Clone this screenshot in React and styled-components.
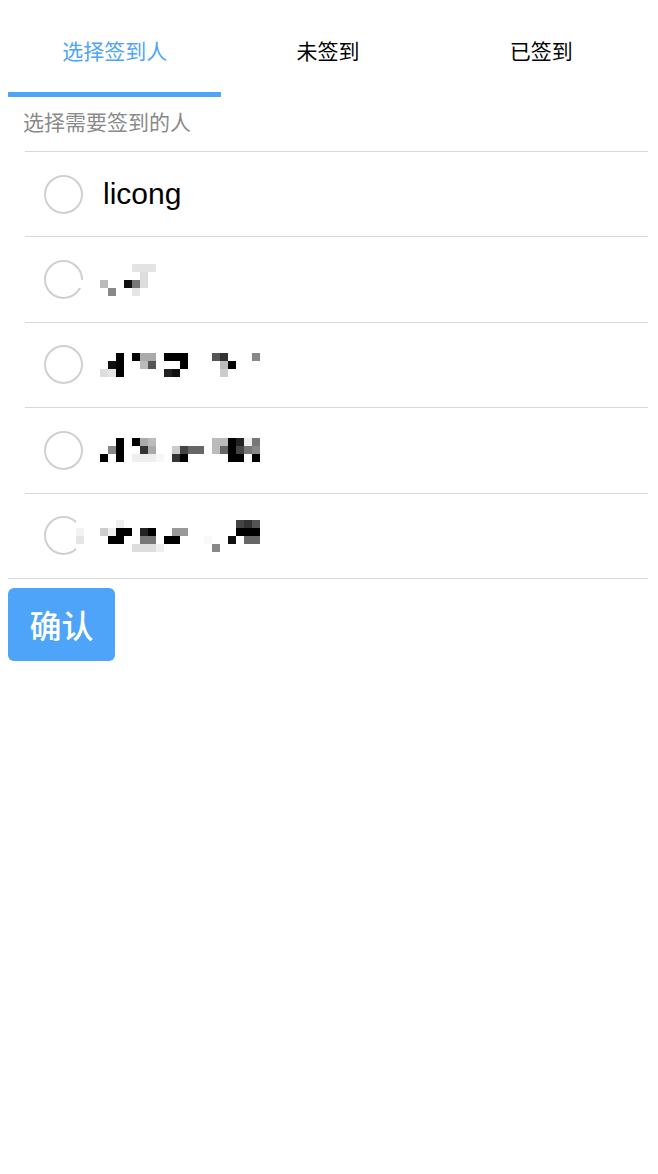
import React, { useState } from 'react'
import styled, { createGlobalStyle } from 'styled-components';

const GlobalStyle = createGlobalStyle`
    body{
        margin: 8px;
        background: #fff;
        font-family: "Liberation Sans", "Noto Sans CJK SC", sans-serif;
    }
`;

const blue = '#4ea4f8';

// the names in the screenshot are blurred into a mosaic, kept as 8px cells
const people = [
    { name: 'licong' },
    { rows: 4, cells: [
        [-3,2,'#fff'],[4,0,'#e3e3e3'],[5,0,'#e3e3e3'],[6,0,'#e3e3e3'],[5,1,'#dcdcdc'],
        [0,2,'#bbb'],[3,2,'#111'],[4,2,'#777'],[5,2,'#dcdcdc'],[1,3,'#888'],[4,3,'#e5e5e5'],
    ]},
    { rows: 3, cells: [
        [2,0,'#000'],[4,0,'#000'],[5,0,'#aaa'],[6,0,'#aaa'],[8,0,'#000'],[9,0,'#000'],[10,0,'#000'],[14,0,'#555'],[15,0,'#333'],[19,0,'#888'],
        [1,1,'#111'],[2,1,'#000'],[5,1,'#bbb'],[6,1,'#555'],[10,1,'#000'],[15,1,'#bbb'],[16,1,'#000'],
        [0,2,'#ddd'],[1,2,'#e5e5e5'],[2,2,'#000'],[8,2,'#222'],[9,2,'#111'],[15,2,'#ccc'],
    ]},
    { rows: 3, cells: [
        [2,0,'#000'],[4,0,'#000'],[5,0,'#aaa'],[6,0,'#bbb'],[14,0,'#bbb'],[15,0,'#bbb'],[16,0,'#000'],[17,0,'#222'],[18,0,'#eee'],[19,0,'#777'],
        [1,1,'#888'],[2,1,'#000'],[5,1,'#333'],[6,1,'#aaa'],[9,1,'#ccc'],[10,1,'#444'],[11,1,'#666'],[12,1,'#666'],[14,1,'#bbb'],[15,1,'#666'],[16,1,'#000'],[17,1,'#444'],[18,1,'#777'],[19,1,'#888'],
        [0,2,'#000'],[2,2,'#000'],[4,2,'#eee'],[5,2,'#eee'],[6,2,'#eee'],[7,2,'#f7f7f7'],[9,2,'#333'],[10,2,'#000'],[16,2,'#000'],[17,2,'#000'],[19,2,'#000'],
    ]},
    { rows: 4, cells: [
        [-3,0,'#fff'],[2,0,'#eee'],[17,0,'#444'],[18,0,'#333'],[19,0,'#555'],
        [-3,1,'#f3f3f3'],[0,1,'#ccc'],[1,1,'#eee'],[2,1,'#000'],[3,1,'#000'],[5,1,'#222'],[6,1,'#000'],[9,1,'#999'],[10,1,'#999'],[17,1,'#000'],[18,1,'#000'],[19,1,'#000'],
        [-3,2,'#e5e5e5'],[1,2,'#000'],[2,2,'#000'],[5,2,'#777'],[6,2,'#777'],[8,2,'#000'],[9,2,'#000'],[13,2,'#f8f8f8'],[16,2,'#111'],[18,2,'#666'],[19,2,'#666'],
        [-3,3,'#fff'],[4,3,'#ddd'],[5,3,'#ddd'],[6,3,'#ddd'],[7,3,'#eee'],[14,3,'#888'],
    ]},
];

function Mosaic({ rows, cells }) {
    return (
        <MosaicSvg width={160} height={rows * 8} viewBox={`0 0 160 ${rows * 8}`}>
            {cells.map(([i, j, c], k) => (
                <rect key={k} x={i * 8} y={j * 8} width="8" height="8" fill={c} />
            ))}
        </MosaicSvg>
    )
}

function App() {
    const [tab, setTab] = useState(0);
    const tabs = ['选择签到人', '未签到', '已签到'];

    return (
        <PageStyled>
            <GlobalStyle />
            <TabBar>
                {tabs.map((t, i) => (
                    <Tab key={t} $active={tab === i} onClick={() => setTab(i)}>{t}</Tab>
                ))}
            </TabBar>
            <Hint>选择需要签到的人</Hint>
            <List>
                {people.map((p, i) => (
                    <Row key={i}>
                        <Radio />
                        {p.name ? <Name>{p.name}</Name> : <Mosaic rows={p.rows} cells={p.cells} />}
                    </Row>
                ))}
            </List>
            <ConfirmButton>确认</ConfirmButton>
        </PageStyled>
    )
}

const PageStyled = styled.div`
    display: flex;
    flex-direction: column;
    align-items: stretch;
    padding-right: 2px;
`;

const TabBar = styled.div`
    display: grid;
    grid-template-columns: repeat(3, 1fr);
`;

const Tab = styled.div`
    height: 84px;
    display: flex;
    align-items: center;
    justify-content: center;
    font-family: "Noto Sans CJK SC", sans-serif;
    font-size: 21px;
    color: ${p => p.$active ? blue : '#000'};
    border-bottom: 5px solid ${p => p.$active ? blue : 'transparent'};
    cursor: pointer;
`;

const Hint = styled.div`
    height: 54px;
    line-height: 48px;
    padding-left: 15px;
    font-family: "Noto Sans CJK SC", sans-serif;
    font-size: 21px;
    color: #8a8a8a;
`;

const List = styled.div`
    border-bottom: 1px solid #d9d9d9;
`;

const Row = styled.div`
    box-sizing: border-box;
    height: 85.4px;
    margin-left: 17px;
    padding-left: 19px;
    border-top: 1px solid #d9d9d9;
    display: flex;
    align-items: center;
`;

const Radio = styled.span`
    box-sizing: border-box;
    flex-shrink: 0;
    width: 39px;
    height: 39px;
    border-radius: 50%;
    border: 2px solid #d0d0d0;
    margin-right: 17px;
`;

const Name = styled.span`
    padding-left: 3px;
    font-family: "Liberation Sans", sans-serif;
    font-size: 30px;
    color: #000;
`;

const MosaicSvg = styled.svg`
    display: block;
    overflow: visible;
    shape-rendering: crispEdges;
`;

const ConfirmButton = styled.button`
    align-self: flex-start;
    margin-top: 9px;
    width: 107px;
    height: 73px;
    border: none;
    border-radius: 6px;
    background: ${blue};
    color: #fff;
    font-family: "Noto Sans CJK SC", sans-serif;
    font-size: 32px;
    font-weight: 500;
    padding: 0;
    cursor: pointer;
`;

export default App;
